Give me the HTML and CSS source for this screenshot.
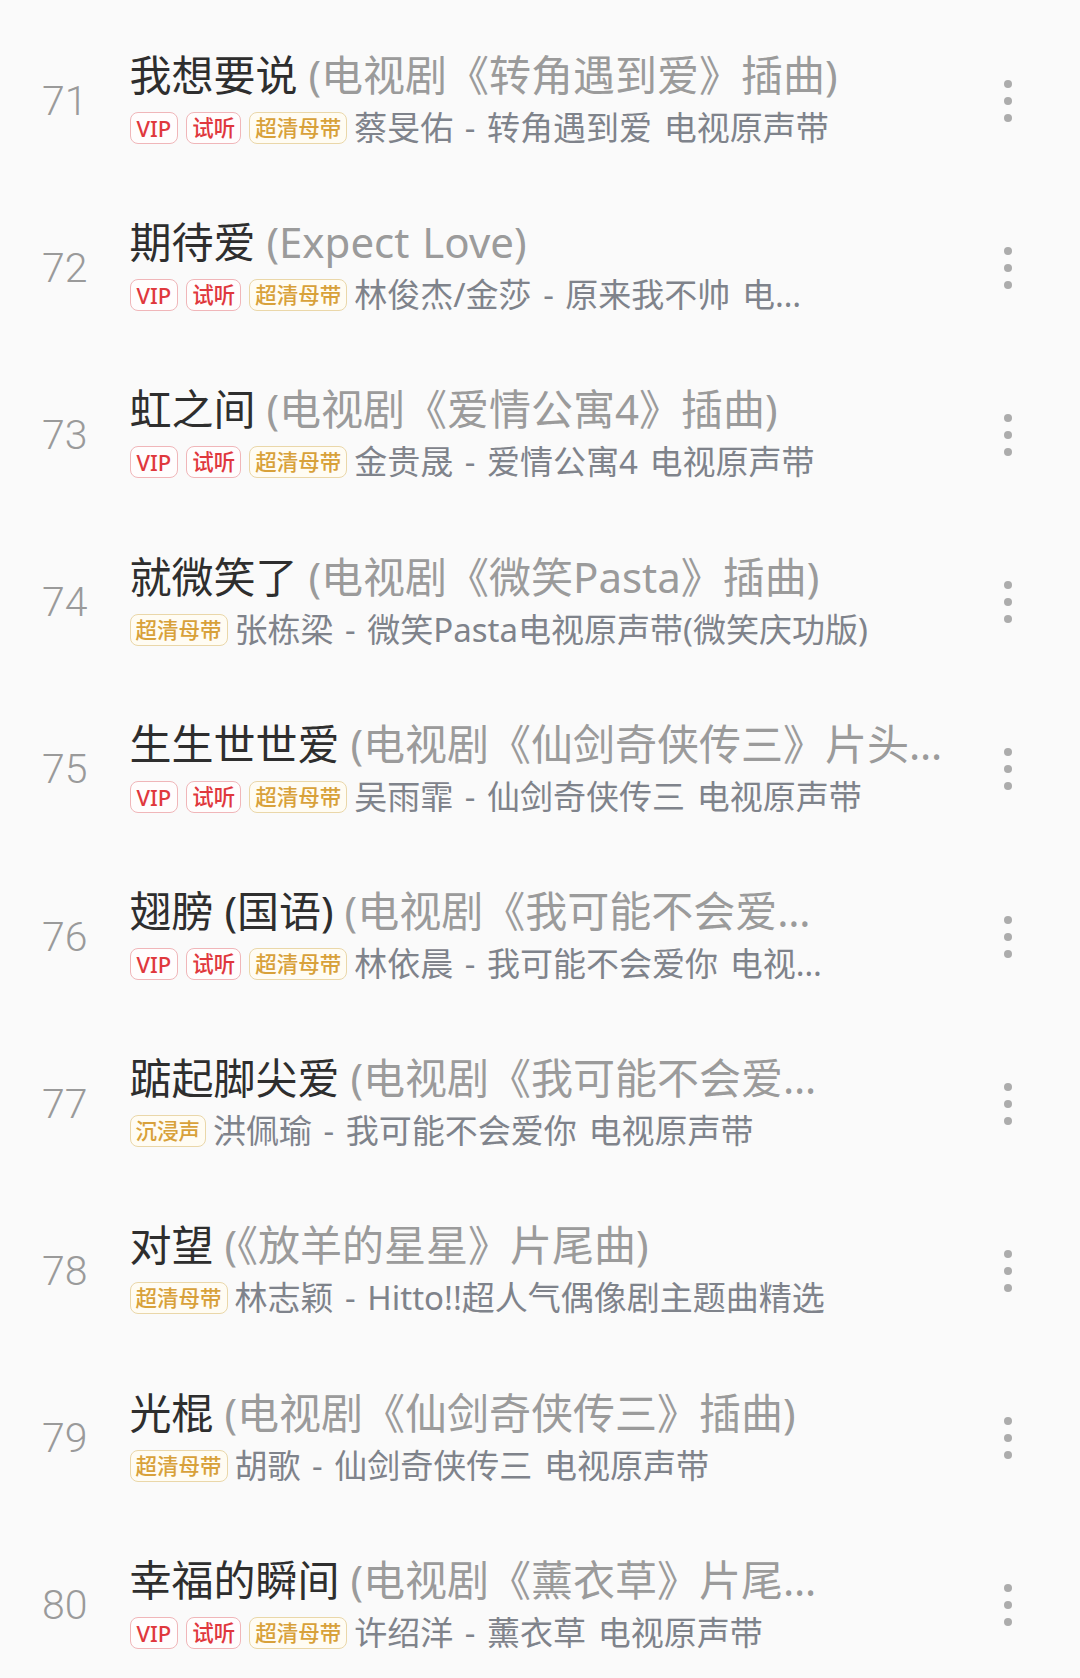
FILE: index.html
```html
<!DOCTYPE html>
<html lang="zh-CN">
<head>
<meta charset="utf-8">
<title>歌曲列表</title>
<link rel="stylesheet" href="styles.css">
</head>
<body>
<div class="list">
  <div class="row">
    <div class="num">71</div>
    <div class="info">
      <div class="title">我想要说 <span class="sub">(电视剧《转角遇到爱》插曲)</span></div>
      <div class="meta"><span class="tag red vip">VIP</span><span class="tag red">试听</span><span class="tag gold">超清母带</span><span class="artist">蔡旻佑 - 转角遇到爱 电视原声带</span></div>
    </div>
    <div class="more"><i></i><i></i><i></i></div>
  </div>
  <div class="row">
    <div class="num">72</div>
    <div class="info">
      <div class="title">期待爱 <span class="sub">(Expect Love)</span></div>
      <div class="meta"><span class="tag red vip">VIP</span><span class="tag red">试听</span><span class="tag gold">超清母带</span><span class="artist">林俊杰/金莎 - 原来我不帅 电…</span></div>
    </div>
    <div class="more"><i></i><i></i><i></i></div>
  </div>
  <div class="row">
    <div class="num">73</div>
    <div class="info">
      <div class="title">虹之间 <span class="sub">(电视剧《爱情公寓4》插曲)</span></div>
      <div class="meta"><span class="tag red vip">VIP</span><span class="tag red">试听</span><span class="tag gold">超清母带</span><span class="artist">金贵晟 - 爱情公寓4 电视原声带</span></div>
    </div>
    <div class="more"><i></i><i></i><i></i></div>
  </div>
  <div class="row">
    <div class="num">74</div>
    <div class="info">
      <div class="title">就微笑了 <span class="sub">(电视剧《微笑Pasta》插曲)</span></div>
      <div class="meta"><span class="tag gold">超清母带</span><span class="artist">张栋梁 - 微笑Pasta电视原声带(微笑庆功版)</span></div>
    </div>
    <div class="more"><i></i><i></i><i></i></div>
  </div>
  <div class="row">
    <div class="num">75</div>
    <div class="info">
      <div class="title">生生世世爱 <span class="sub">(电视剧《仙剑奇侠传三》片头…</span></div>
      <div class="meta"><span class="tag red vip">VIP</span><span class="tag red">试听</span><span class="tag gold">超清母带</span><span class="artist">吴雨霏 - 仙剑奇侠传三 电视原声带</span></div>
    </div>
    <div class="more"><i></i><i></i><i></i></div>
  </div>
  <div class="row">
    <div class="num">76</div>
    <div class="info">
      <div class="title">翅膀 (国语) <span class="sub">(电视剧《我可能不会爱…</span></div>
      <div class="meta"><span class="tag red vip">VIP</span><span class="tag red">试听</span><span class="tag gold">超清母带</span><span class="artist">林依晨 - 我可能不会爱你 电视…</span></div>
    </div>
    <div class="more"><i></i><i></i><i></i></div>
  </div>
  <div class="row">
    <div class="num">77</div>
    <div class="info">
      <div class="title">踮起脚尖爱 <span class="sub">(电视剧《我可能不会爱…</span></div>
      <div class="meta"><span class="tag gold">沉浸声</span><span class="artist">洪佩瑜 - 我可能不会爱你 电视原声带</span></div>
    </div>
    <div class="more"><i></i><i></i><i></i></div>
  </div>
  <div class="row">
    <div class="num">78</div>
    <div class="info">
      <div class="title">对望 <span class="sub">(《放羊的星星》片尾曲)</span></div>
      <div class="meta"><span class="tag gold">超清母带</span><span class="artist">林志颖 - Hitto!!超人气偶像剧主题曲精选</span></div>
    </div>
    <div class="more"><i></i><i></i><i></i></div>
  </div>
  <div class="row">
    <div class="num">79</div>
    <div class="info">
      <div class="title">光棍 <span class="sub">(电视剧《仙剑奇侠传三》插曲)</span></div>
      <div class="meta"><span class="tag gold">超清母带</span><span class="artist">胡歌 - 仙剑奇侠传三 电视原声带</span></div>
    </div>
    <div class="more"><i></i><i></i><i></i></div>
  </div>
  <div class="row">
    <div class="num">80</div>
    <div class="info">
      <div class="title">幸福的瞬间 <span class="sub">(电视剧《薰衣草》片尾…</span></div>
      <div class="meta"><span class="tag red vip">VIP</span><span class="tag red">试听</span><span class="tag gold">超清母带</span><span class="artist">许绍洋 - 薰衣草 电视原声带</span></div>
    </div>
    <div class="more"><i></i><i></i><i></i></div>
  </div>
</div>
</body>
</html>
```

FILE: styles.css
```css
html, body {
  margin: 0;
  padding: 0;
  background: #fafafa;
}

body {
  font-family: "Noto Sans", "Noto Sans CJK SC", sans-serif;
  overflow: hidden;
}

.list {
  padding-top: 17px;
}

.row {
  display: flex;
  align-items: center;
  height: 167.2px;
  box-sizing: border-box;
}

.num {
  flex: 0 0 129.5px;
  box-sizing: border-box;
  padding-left: 42px;
  font-family: Roboto, "Noto Sans", sans-serif;
  font-weight: 300;
  font-size: 41px;
  color: #9a9a9a;
}

.info {
  flex: 1;
  min-width: 0;
  display: flex;
  flex-direction: column;
  gap: 11px;
  padding-bottom: 4px;
}

.title {
  font-size: 42px;
  line-height: 48px;
  color: #2e2e2e;
  white-space: nowrap;
}

.title .sub {
  color: #9b9b9b;
  word-spacing: 2px;
}

.meta {
  display: flex;
  align-items: center;
  height: 36px;
  gap: 8px;
  white-space: nowrap;
}

.tag {
  height: 32px;
  box-sizing: border-box;
  border: 1px solid;
  border-radius: 8px;
  padding: 0 5px;
  font-size: 21.5px;
  line-height: 30px;
  font-weight: 500;
}

.tag.vip {
  padding: 0 6px;
  font-size: 22px;
}

.tag.red {
  color: #e0383d;
  border-color: #f0b6b9;
  background: #fffdfd;
}

.tag.gold {
  color: #d8a13a;
  border-color: #ead7a9;
  background: #fffcf3;
}

.artist {
  font-size: 33px;
  line-height: 36px;
  color: #7f838b;
  word-spacing: 3px;
  margin-left: -1px;
}

.more {
  flex: 0 0 40px;
  margin-right: 52px;
  display: flex;
  flex-direction: column;
  align-items: center;
  gap: 9px;
}

.more i {
  display: block;
  width: 8px;
  height: 8px;
  border-radius: 50%;
  background: #acacac;
}
```
